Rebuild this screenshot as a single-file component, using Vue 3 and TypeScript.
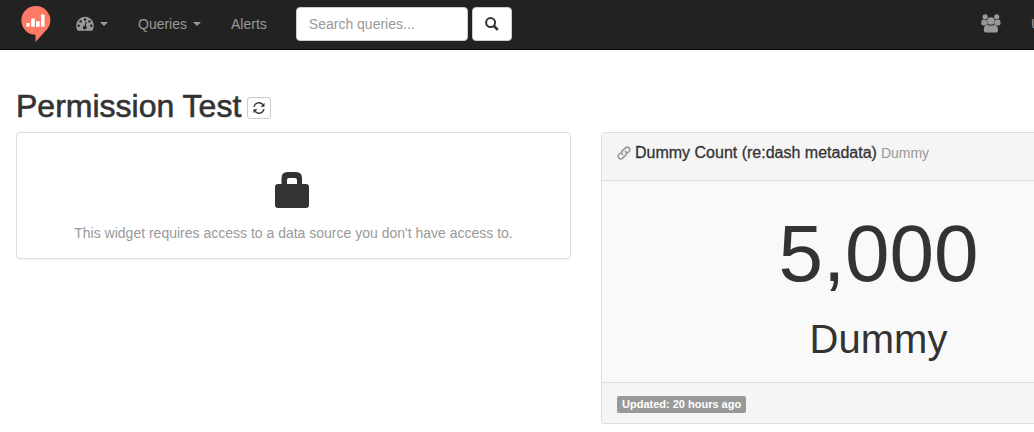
<script setup lang="ts">
import { ref } from 'vue'

interface CounterWidget {
  title: string
  visualization: string
  value: number
  label: string
  updated: string
}

const search = ref('')
const dashboardName = 'Permission Test'
const widget: CounterWidget = {
  title: 'Dummy Count (re:dash metadata)',
  visualization: 'Dummy',
  value: 5000,
  label: 'Dummy',
  updated: '20 hours ago',
}
const formattedValue = widget.value.toLocaleString('en-US')
</script>

<template>
  <div class="app">
    <header class="navbar">
      <a class="brand" href="#" aria-label="Home">
        <svg width="30" height="38" viewBox="0 0 30 38">
          <path fill="#ff7964" d="M15 1a14.3 14.3 0 0 1 11.5 22.8L14.5 37V29.8A14.4 14.4 0 0 1 15 1z" />
          <path fill="#fff" d="M5.4 18h3.2v3.8H5.4zM10.2 13.6h3.6v8.2h-3.6zM15 16.2h3.6v5.6H15zM20 9.6h3.6v12.2H20z" />
        </svg>
      </a>
      <nav class="menu" aria-label="Main">
        <a class="item" href="#" aria-label="Dashboards">
          <svg class="gauge" width="18" height="15" viewBox="0 0 18 15">
            <path fill="currentColor" d="M9 .8a9 9 0 0 1 7.6 13.4q-.3.5-.8.5H2.2q-.5 0-.8-.5A9 9 0 0 1 9 .8z" />
            <g fill="#222">
              <circle cx="2.7" cy="9.8" r="1.2" /><circle cx="4.6" cy="5.4" r="1.2" />
              <circle cx="9" cy="3.5" r="1.2" /><circle cx="13.4" cy="5.4" r="1.2" />
              <circle cx="15.3" cy="9.8" r="1.2" /><circle cx="8.8" cy="11.6" r="1.9" />
              <path d="M8.2 11.2l1.5-5.5 1 .3-1.5 5.5z" />
            </g>
          </svg>
          <span class="caret"></span>
        </a>
        <a class="item" href="#">Queries <span class="caret"></span></a>
        <a class="item" href="#">Alerts</a>
      </nav>
      <form class="search" role="search" @submit.prevent>
        <input v-model="search" type="text" placeholder="Search queries..." aria-label="Search queries" />
        <button type="submit" aria-label="Search">
          <svg width="14" height="14" viewBox="0 0 14 14">
            <circle cx="5.6" cy="5.6" r="4.5" fill="none" stroke="#333" stroke-width="2" />
            <path d="M9 9l3.8 3.8" stroke="#333" stroke-width="2.6" />
          </svg>
        </button>
      </form>
      <nav class="account" aria-label="Account">
        <a class="item" href="#" aria-label="Users">
          <svg width="20" height="19" viewBox="0 0 20 19" fill="currentColor">
            <circle cx="4.1" cy="2.8" r="2.6" /><circle cx="15.7" cy="2.8" r="2.6" />
            <path d="M2.2 5.4q2 1 3.6.4-.4 2.6 1 4.7-1.8.1-2.5 1H2.2Q.2 11.4.2 9.5q0-4.1 2-4.1zM17.7 5.4q-2 1-3.6.4.4 2.6-1 4.7 1.8.1 2.5 1h2q2-.1 2-2 0-4.1-1.9-4.1z" />
            <circle cx="9.900" cy="7" r="3.800" />
            <path d="M6.5 10.7q3.4 2.2 6.8 0 3.7.2 3.7 5.3 0 2.6-2.7 2.6H5.5q-2.7 0-2.7-2.6 0-5.1 3.7-5.3z" />
          </svg>
        </a>
        <a class="item" href="#">User</a>
      </nav>
    </header>

    <main class="dashboard">
      <h2 class="heading">
        {{ dashboardName }}
        <button class="refresh" type="button" aria-label="Refresh">
          <svg width="12" height="12" viewBox="0 0 12 12">
            <path d="M1 5A5 5 0 0 1 9.7 2.5M11 7A5 5 0 0 1 2.3 9.5" fill="none" stroke="#333" stroke-width="1.3" />
            <path fill="#333" d="M11.5.7v4H7.5zM.5 11.3v-4h4z" />
          </svg>
        </button>
      </h2>

      <div class="widgets">
        <section class="panel restricted">
          <svg width="37" height="36" viewBox="0 0 37 36">
            <path fill="#333" fill-rule="evenodd" d="M6.5 12V6Q6.500 0 12.500 0h8.500Q27 0 27 6v6h4q3 0 3 3v18q0 3-3 3H3q-3 0-3-3V15q0-3 3-3zM12 12h10V8q0-2-2-2h-6q-2 0-2 2z" />
          </svg>
          <p>This widget requires access to a data source you don't have access to.</p>
        </section>

        <section class="panel">
          <div class="panel-head">
            <h3>
              <svg width="14" height="14" viewBox="0 0 14 14" fill="none" stroke="#999" stroke-width="1.6" stroke-linecap="round">
                <path d="M5.6 8.6Q3.7 6.700 5.300 4.900L8.600 1.700Q10.300.4 12 1.900q1.600 1.700.2 3.400l-1.700 1.700" />
                <path d="M8.400 5.400Q10.300 7.300 8.700 9.100l-3.300 3.200Q3.700 13.600 2 12.100.4 10.400 1.800 8.700l1.700-1.700" />
              </svg>
              <a href="#">{{ widget.title }}</a>
              <small>{{ widget.visualization }}</small>
            </h3>
          </div>
          <div class="counter">
            <div class="value">{{ formattedValue }}</div>
            <div class="label">{{ widget.label }}</div>
          </div>
          <div class="panel-foot">
            <span class="badge">Updated: {{ widget.updated }}</span>
          </div>
        </section>
      </div>
    </main>
  </div>
</template>

<style>
body {
  margin: 0;
  background: #fff;
  overflow: hidden;
}
</style>

<style scoped>
.app {
  min-width: 1172px;
  font: 14px/20px "Liberation Sans", Arial, sans-serif;
  color: #333;
}
.app * {
  box-sizing: border-box;
}
svg {
  display: block;
}
a {
  color: inherit;
  text-decoration: none;
}
.navbar {
  display: flex;
  align-items: center;
  height: 50px;
  padding: 0 16px 2px 21px;
  background: #222;
  border-bottom: 1px solid #080808;
  color: #999;
}
.brand {
  margin-right: 10px;
}
.menu,
.account {
  display: flex;
  align-items: center;
}
.item {
  display: flex;
  align-items: center;
  padding: 0 15px;
}
.caret {
  margin-left: 6px;
  border: 4px solid transparent;
  border-top-color: currentColor;
  border-bottom: 0;
}
.search {
  display: flex;
  gap: 4px;
  margin-left: 14px;
}
.search input {
  width: 172px;
  height: 34px;
  padding: 6px 12px;
  border: 1px solid #ccc;
  border-radius: 4px;
  background: #fff;
  color: #555;
  font: inherit;
}
.search input::placeholder {
  color: #999;
  opacity: 1;
}
.search button {
  display: grid;
  place-items: center;
  width: 40px;
  height: 34px;
  padding: 0;
  border: 1px solid #ccc;
  border-radius: 4px;
  background: #fff;
}
.account {
  margin-left: auto;
  min-width: 190px;
}
.dashboard {
  padding: 39px 16px 0;
}
.heading {
  display: flex;
  align-items: center;
  gap: 6px;
  margin: 0 0 9px;
  font-size: 32px;
  line-height: 34px;
  font-weight: 400;
  -webkit-text-stroke: 0.6px #333;
}
.refresh {
  display: grid;
  place-items: center;
  width: 24px;
  height: 22px;
  margin-top: 4px;
  padding: 0;
  border: 1px solid #ccc;
  border-radius: 3px;
  background: #fff;
}
.widgets {
  display: grid;
  grid-template-columns: 1fr 1fr;
  gap: 30px;
  align-items: start;
}
.panel {
  border: 1px solid #ddd;
  border-radius: 4px;
  background: #fff;
  box-shadow: 0 1px 1px rgba(0, 0, 0, 0.05);
  overflow: hidden;
}
.restricted {
  display: flex;
  flex-direction: column;
  align-items: center;
  gap: 15px;
  padding: 39px 15px 15px;
  color: #999;
}
.restricted p {
  margin: 0;
}
.panel-head {
  height: 48px;
  padding: 10px 15px;
  background: #f5f5f5;
  border-bottom: 1px solid #ddd;
}
.panel-head h3 {
  display: flex;
  align-items: center;
  gap: 4px;
  margin: 0;
  font-size: 16px;
  font-weight: 400;
}
.panel-head a {
  -webkit-text-stroke: 0.3px #333;
}
.panel-head small {
  font-size: 14px;
  color: #999;
}
.counter {
  padding: 27px 15px 20px;
  background: #f9f9f9;
  text-align: center;
}
.value {
  font-size: 80px;
  line-height: 92px;
}
.label {
  margin-top: 16px;
  font-size: 40px;
  line-height: 46px;
}
.panel-foot {
  display: flex;
  padding: 13px 15px 10px;
  background: #f5f5f5;
  border-top: 1px solid #ddd;
}
.badge {
  padding: 2px 5px 3px;
  border-radius: 2px;
  background: #999;
  color: #fff;
  font-size: 11px;
  line-height: 12px;
  font-weight: 700;
}
</style>
